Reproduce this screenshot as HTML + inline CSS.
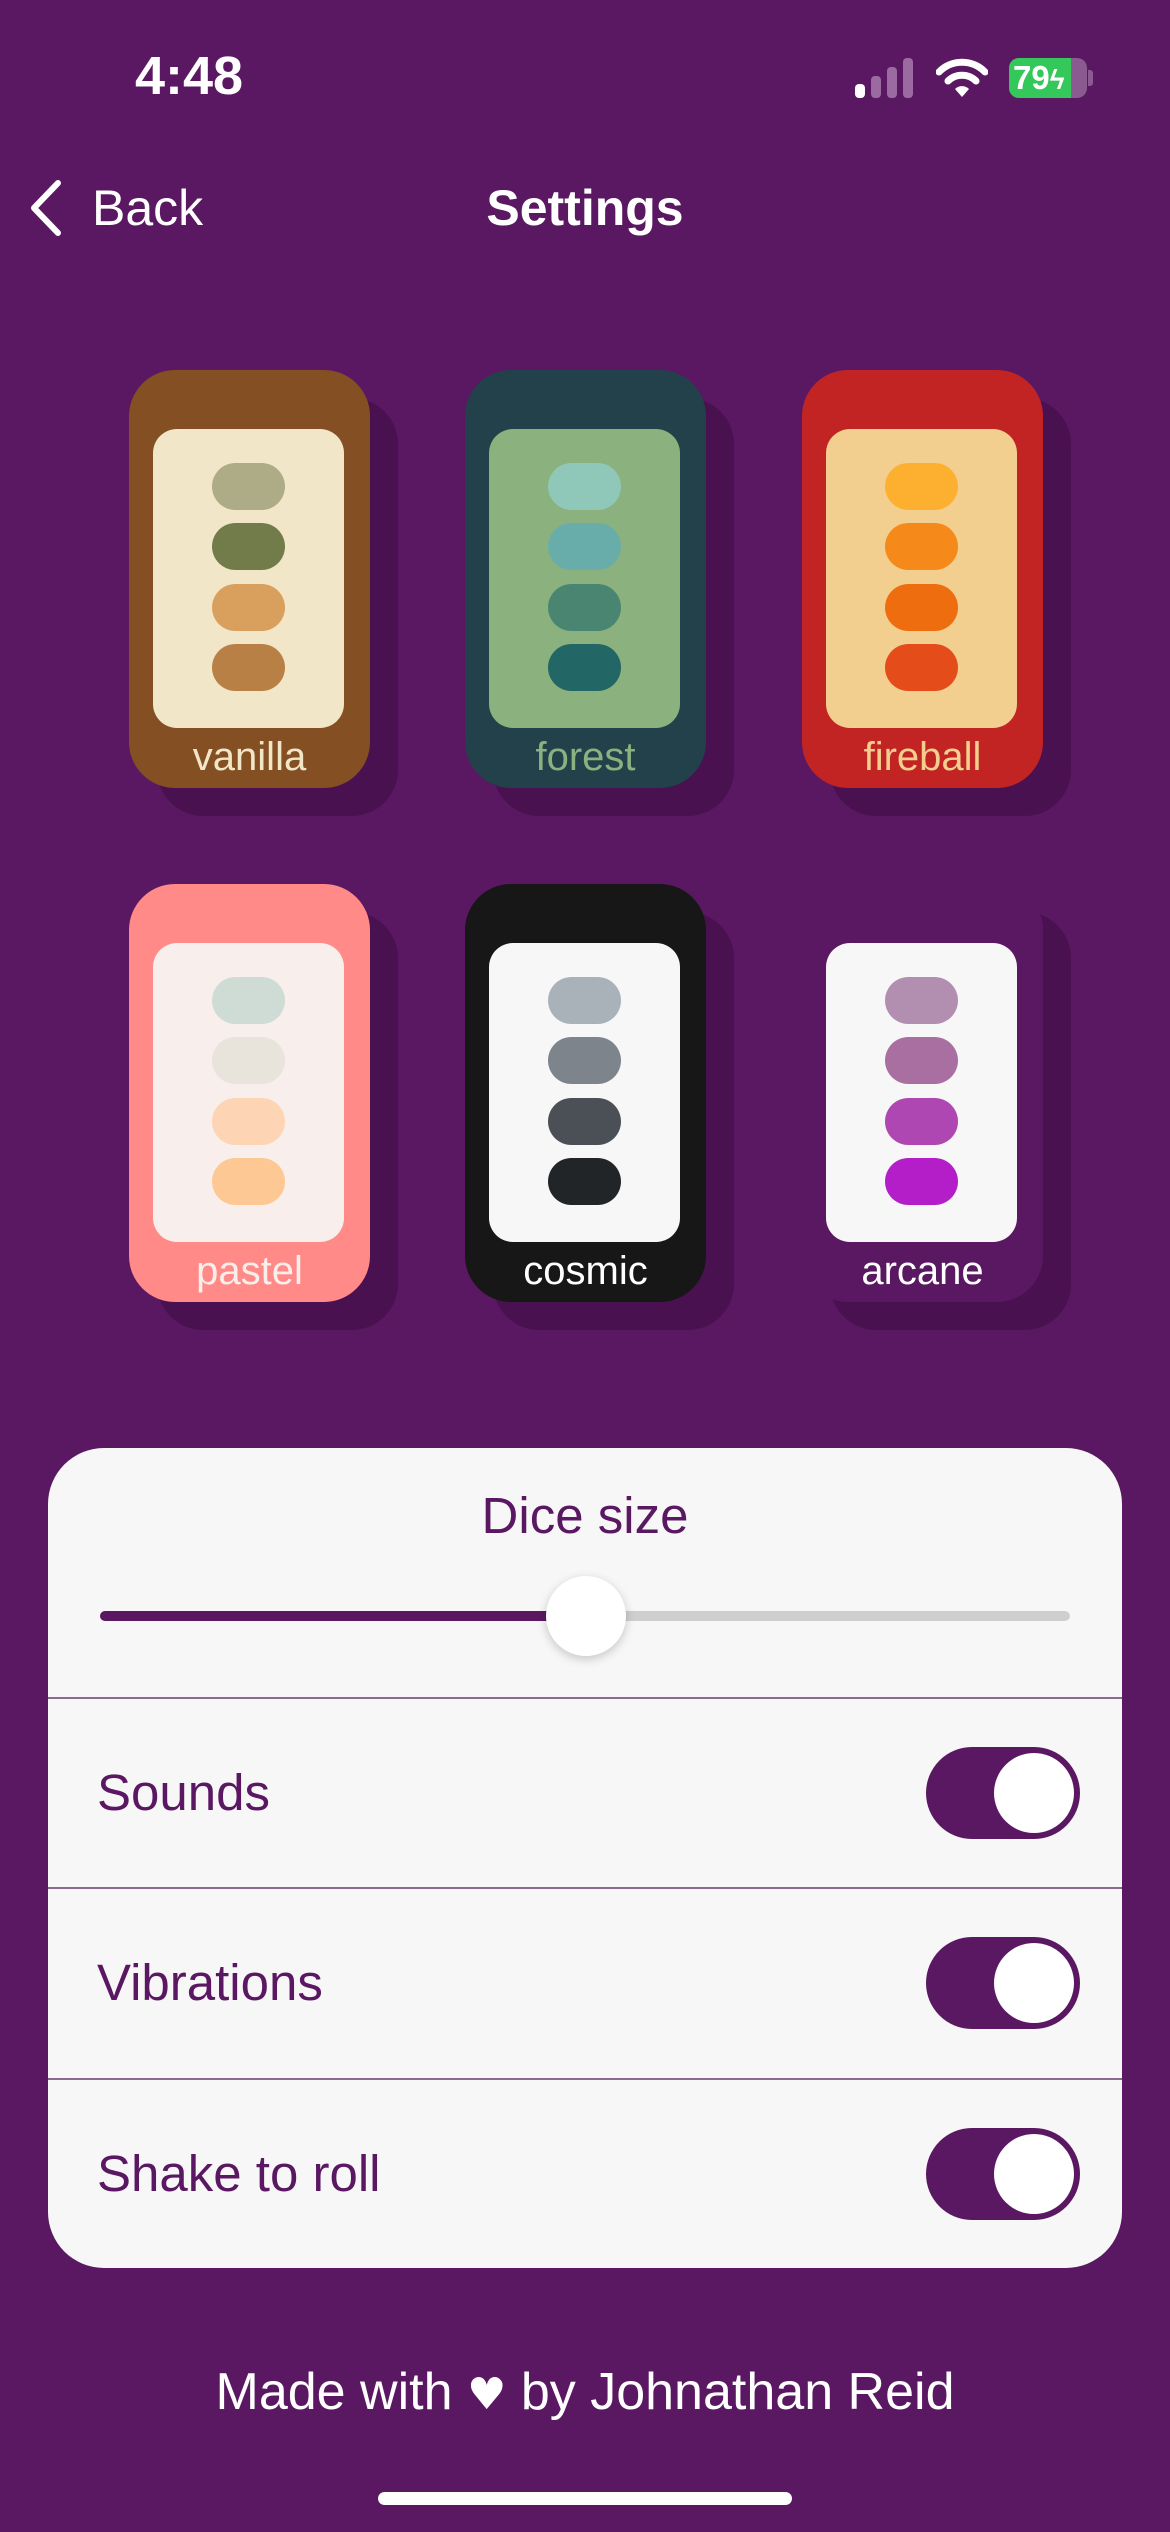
<!DOCTYPE html>
<html><head><meta charset="utf-8"><style>
*{margin:0;padding:0;box-sizing:border-box}
body{width:1170px;height:2532px;background:#5a1862;font-family:"Liberation Sans",sans-serif;position:relative;overflow:hidden;color:#fff}
.abs{position:absolute}
.card{position:absolute;width:241px;height:418px;border-radius:46px}
.sh{position:absolute;width:241px;height:418px;border-radius:46px;background:#4a1150}
.inner{position:absolute;left:24px;top:59px;width:191px;height:299px;border-radius:24px}
.pill{position:absolute;left:59px;width:73px;height:47px;border-radius:24px}
.lbl{position:absolute;left:0;width:241px;top:363px;text-align:center;font-size:40px;line-height:48px}
.row{position:absolute;left:97px;font-size:51px;color:#5a1862}
.tg{position:absolute;left:926px;width:154px;height:92px;border-radius:46px;background:#5a1862}
.tg::after{content:"";position:absolute;right:6px;top:6px;width:80px;height:80px;border-radius:50%;background:#fff}
.div{position:absolute;left:48px;width:1074px;height:2px;background:#8a6a8e}
</style></head><body>
<div class="abs" style="left:135px;top:44px;font-size:54px;font-weight:bold;line-height:64px">4:48</div>
<svg class="abs" style="left:855px;top:58px" width="60" height="40">
<rect x="0" y="26" width="10" height="14" rx="4" fill="#fff"/>
<rect x="16" y="18" width="10" height="22" rx="4" fill="#9a6aa0"/>
<rect x="32" y="9" width="10" height="31" rx="4" fill="#9a6aa0"/>
<rect x="48" y="0" width="10" height="40" rx="4" fill="#9a6aa0"/>
</svg>
<svg class="abs" style="left:936px;top:58px" width="52" height="40" viewBox="0 0 52 40">
<path d="M3 14 A32 32 0 0 1 49 14" stroke="#fff" stroke-width="7" fill="none" stroke-linecap="round"/>
<path d="M12 23 A20 20 0 0 1 40 23" stroke="#fff" stroke-width="7" fill="none" stroke-linecap="round"/>
<path d="M19 31 L26 39 L33 31 A10 10 0 0 0 19 31Z" fill="#fff"/>
</svg>
<div class="abs" style="left:1009px;top:58px;width:78px;height:40px;border-radius:10px;background:#8a5a90;overflow:hidden">
<div style="width:62px;height:40px;background:#34c759"></div>
<div class="abs" style="left:4px;top:0;font-size:33px;font-weight:bold;line-height:40px">79<span style="font-size:28px">ϟ</span></div>
</div>
<div class="abs" style="left:1088px;top:70px;width:5px;height:16px;border-radius:0 3px 3px 0;background:#8a5a90"></div>
<svg class="abs" style="left:26px;top:178px" width="40" height="60"><path d="M32 5 L8 30 L32 55" stroke="#fff" stroke-width="6" fill="none" stroke-linecap="round" stroke-linejoin="round"/></svg>
<div class="abs" style="left:92px;top:178px;font-size:50px;line-height:60px">Back</div>
<div class="abs" style="left:0;width:1170px;top:178px;text-align:center;font-size:50px;font-weight:bold;line-height:60px">Settings</div>

<div class="sh" style="left:157px;top:398px"></div>
<div class="card" style="left:129px;top:370px;background:#844f22">
<div class="inner" style="background:#f2e6c9">
<div class="pill" style="top:34px;background:#adac86"></div><div class="pill" style="top:94px;background:#727c4a"></div><div class="pill" style="top:155px;background:#d8a05c"></div><div class="pill" style="top:215px;background:#b88045"></div></div>
<div class="lbl" style="color:#f2e6c9">vanilla</div></div>

<div class="sh" style="left:493px;top:398px"></div>
<div class="card" style="left:465px;top:370px;background:#22414b">
<div class="inner" style="background:#8bb17e">
<div class="pill" style="top:34px;background:#8fc8b8"></div><div class="pill" style="top:94px;background:#69adaa"></div><div class="pill" style="top:155px;background:#4a8572"></div><div class="pill" style="top:215px;background:#236666"></div></div>
<div class="lbl" style="color:#8bb17e">forest</div></div>

<div class="sh" style="left:830px;top:398px"></div>
<div class="card" style="left:802px;top:370px;background:#c22424">
<div class="inner" style="background:#f2cf8f">
<div class="pill" style="top:34px;background:#fdb030"></div><div class="pill" style="top:94px;background:#f5891a"></div><div class="pill" style="top:155px;background:#ee6d0e"></div><div class="pill" style="top:215px;background:#e44d1a"></div></div>
<div class="lbl" style="color:#f2cf8f">fireball</div></div>

<div class="sh" style="left:157px;top:912px"></div>
<div class="card" style="left:129px;top:884px;background:#ff8a87">
<div class="inner" style="background:#f8eeeb">
<div class="pill" style="top:34px;background:#cfdcd6"></div><div class="pill" style="top:94px;background:#e8e4dc"></div><div class="pill" style="top:155px;background:#fdd5b4"></div><div class="pill" style="top:215px;background:#fec894"></div></div>
<div class="lbl" style="color:#f8eeeb">pastel</div></div>

<div class="sh" style="left:493px;top:912px"></div>
<div class="card" style="left:465px;top:884px;background:#171717">
<div class="inner" style="background:#f7f7f7">
<div class="pill" style="top:34px;background:#aab2b9"></div><div class="pill" style="top:94px;background:#7d848b"></div><div class="pill" style="top:155px;background:#4b5056"></div><div class="pill" style="top:215px;background:#222528"></div></div>
<div class="lbl" style="color:#fff">cosmic</div></div>

<div class="sh" style="left:830px;top:912px"></div>
<div class="card" style="left:802px;top:884px;background:#5a1862">
<div class="inner" style="background:#f7f7f7">
<div class="pill" style="top:34px;background:#b28fb0"></div><div class="pill" style="top:94px;background:#a86fa0"></div><div class="pill" style="top:155px;background:#ae47b1"></div><div class="pill" style="top:215px;background:#b41ec8"></div></div>
<div class="lbl" style="color:#fff">arcane</div></div>

<div class="abs" style="left:48px;top:1448px;width:1074px;height:820px;border-radius:56px;background:#f7f7f7"></div>
<div class="abs" style="left:0;width:1170px;top:1486px;text-align:center;font-size:51px;color:#5a1862;line-height:60px">Dice size</div>
<div class="abs" style="left:100px;top:1611px;width:970px;height:10px;border-radius:5px;background:#cfcfcf"></div>
<div class="abs" style="left:100px;top:1611px;width:486px;height:10px;border-radius:5px;background:#5a1862"></div>
<div class="abs" style="left:546px;top:1576px;width:80px;height:80px;border-radius:50%;background:#fff;box-shadow:0 3px 10px rgba(0,0,0,.2)"></div>
<div class="div" style="top:1697px"></div>
<div class="div" style="top:1887px"></div>
<div class="div" style="top:2078px"></div>
<div class="row" style="top:1763px">Sounds</div>
<div class="row" style="top:1953px">Vibrations</div>
<div class="row" style="top:2144px">Shake to roll</div>
<div class="tg" style="top:1747px"></div>
<div class="tg" style="top:1937px"></div>
<div class="tg" style="top:2128px"></div>

<div class="abs" style="left:0;width:1170px;top:2362px;text-align:center;font-size:52px;line-height:60px">Made with <span style="font-family:'DejaVu Sans',sans-serif;font-size:44px">♥</span> by Johnathan Reid</div>
<div class="abs" style="left:378px;top:2492px;width:414px;height:13px;border-radius:7px;background:#fff"></div>
</body></html>
